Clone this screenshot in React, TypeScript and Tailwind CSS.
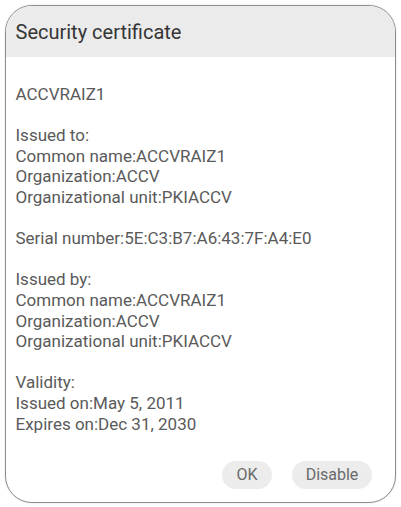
export default function App() {
  const sections: string[][] = [
    ['ACCVRAIZ1'],
    ['Issued to:', 'Common name:ACCVRAIZ1', 'Organization:ACCV', 'Organizational unit:PKIACCV'],
    ['Serial number:5E:C3:B7:A6:43:7F:A4:E0'],
    ['Issued by:', 'Common name:ACCVRAIZ1', 'Organization:ACCV', 'Organizational unit:PKIACCV'],
    ['Validity:', 'Issued on:May 5, 2011', 'Expires on:Dec 31, 2030'],
  ];

  return (
    <div className="w-[401px] h-[507px] bg-white p-[5px] font-['Roboto',sans-serif]">
      <div className="h-[498px] flex flex-col rounded-[27px] border-[1.5px] border-[#8d8d8d] overflow-hidden bg-white shadow-[0_0_2px_rgba(0,0,0,0.15)]">
        {/* Header */}
        <div className="h-[51px] bg-[#ebebeb] flex items-center px-[9.5px] shrink-0">
          <h1 className="text-[20px] text-[#353535]">Security certificate</h1>
        </div>

        {/* Body */}
        <div className="flex-1 pt-[27px] pl-[9.5px] text-[17px] leading-[20.6px] text-[#5a5a5a] flex flex-col gap-[20.6px]">
          {sections.map((lines, i) => (
            <div key={i}>
              {lines.map((line, j) => (
                <p key={j}>{line}</p>
              ))}
            </div>
          ))}
        </div>

        {/* Buttons */}
        <div className="flex justify-end gap-[20px] pr-[23px] pb-[13px] shrink-0">
          <button className="h-[28px] w-[50px] rounded-full bg-[#ececec] text-[16px] text-[#6a6a6a]">OK</button>
          <button className="h-[28px] w-[80px] rounded-full bg-[#ececec] text-[16px] text-[#6a6a6a]">Disable</button>
        </div>
      </div>
    </div>
  );
}
